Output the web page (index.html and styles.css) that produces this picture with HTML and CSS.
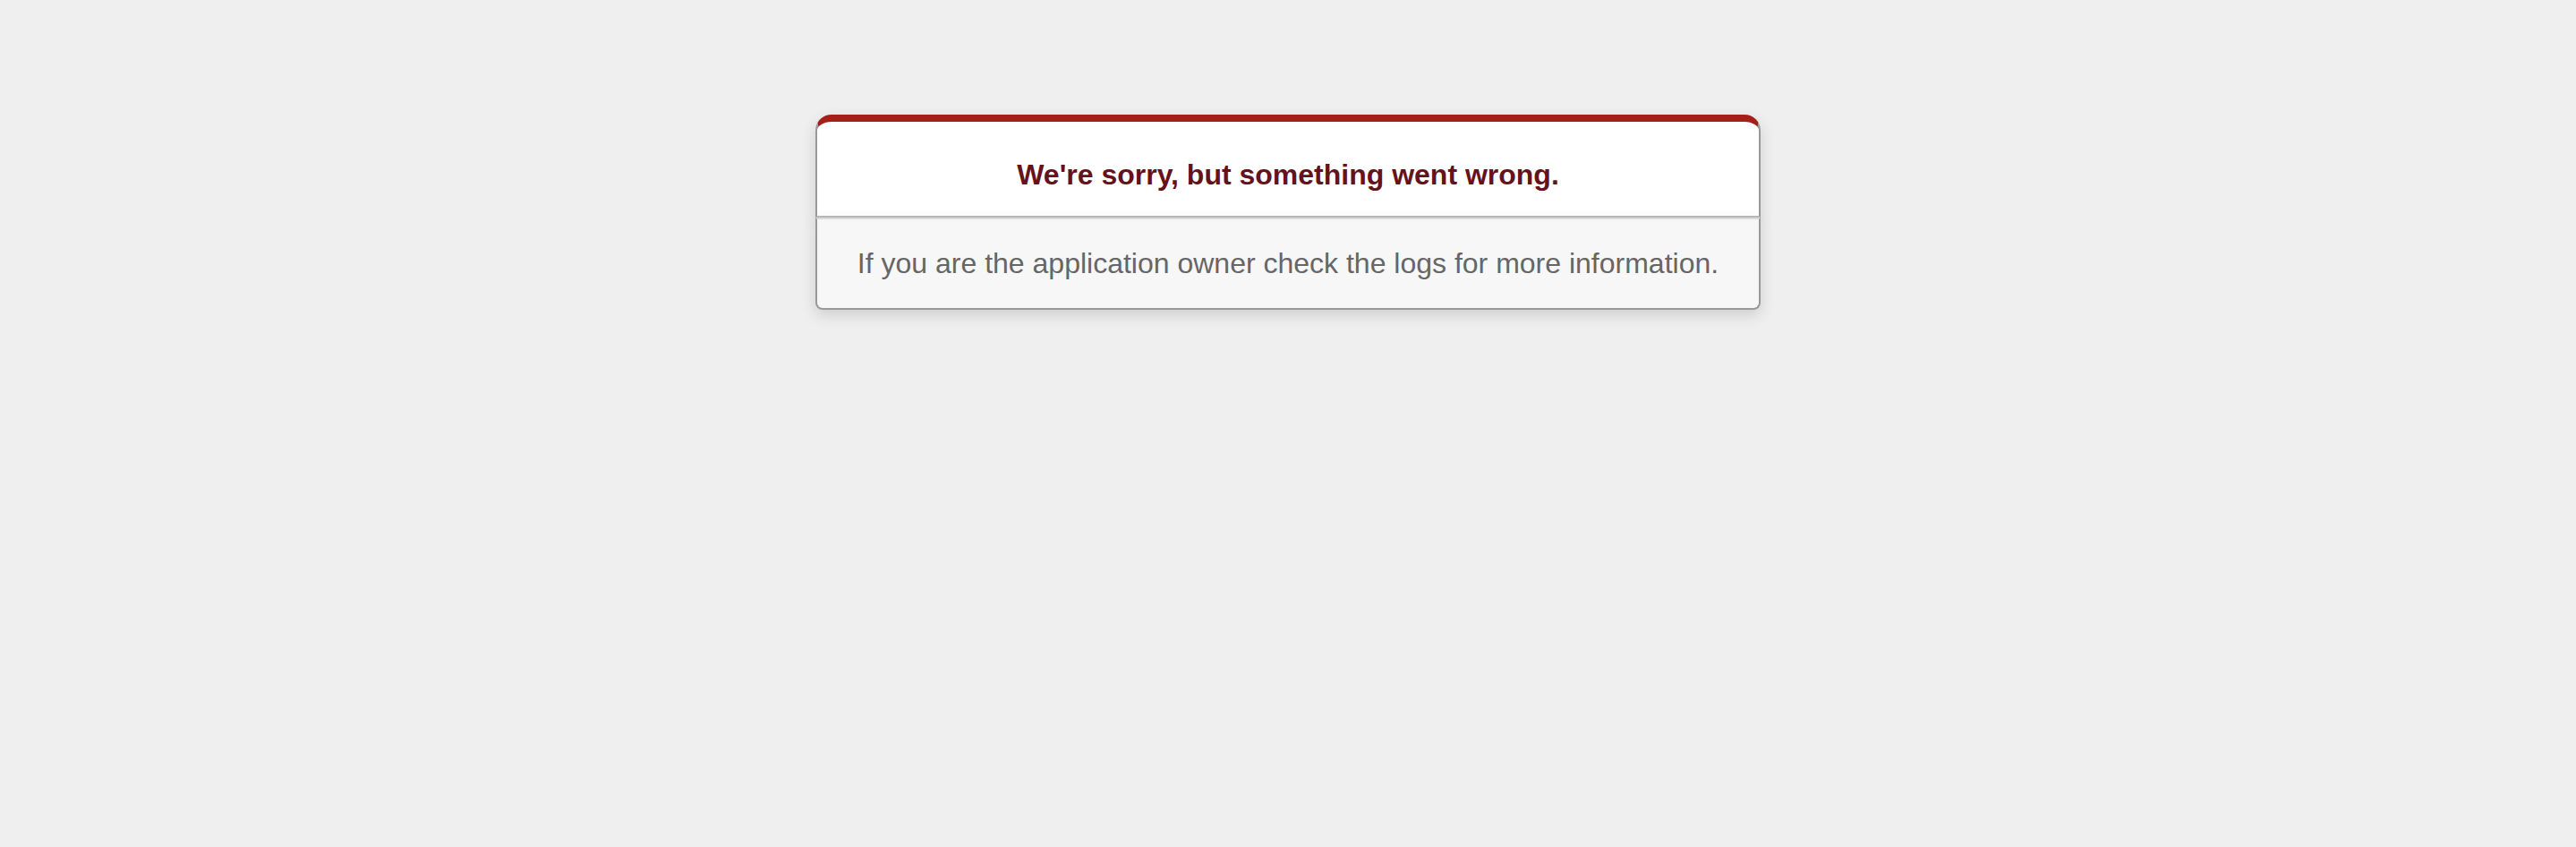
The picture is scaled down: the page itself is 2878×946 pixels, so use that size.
FILE: index.html
```html
<!DOCTYPE html>
<html>
<head>
<meta charset="utf-8">
<title>We're sorry, but something went wrong (500)</title>
<link rel="stylesheet" href="styles.css">
</head>
<body class="error-page">
  <div class="dialog">
    <div class="dialog-head">
      <h1 class="dialog-title">We're sorry, but something went wrong.</h1>
    </div>
    <p class="dialog-foot">If you are the application owner check the logs for more information.</p>
  </div>
</body>
</html>
```

FILE: styles.css
```css
.error-page {
  background-color: #EFEFEF;
  color: #2E2F30;
  text-align: center;
  font-family: "Liberation Sans", Arial, sans-serif;
  font-size: 32px;
  margin: 0;
}

.dialog {
  width: 95%;
  max-width: 33em;
  margin: 4em auto 0;
}

.dialog-head {
  border: 2px solid #CCC;
  border-right-color: #999;
  border-left-color: #999;
  border-bottom-color: #BBB;
  border-top: #A41F17 solid 8px;
  border-top-left-radius: 18px;
  border-top-right-radius: 18px;
  background-color: white;
  padding: 14px 12% 0;
  box-shadow: 0 6px 16px rgba(50, 50, 50, 0.17);
}

.dialog-title {
  font-size: 100%;
  color: #65131A;
  line-height: 1.5em;
  margin: 0.67em 0;
}

.dialog-foot {
  margin: 0 0 1em;
  padding: 1em;
  line-height: 1.1;
  background-color: #F7F7F7;
  border: 2px solid #CCC;
  border-right-color: #999;
  border-left-color: #999;
  border-bottom-color: #999;
  border-bottom-left-radius: 8px;
  border-bottom-right-radius: 8px;
  border-top-color: #DADADA;
  color: #666;
  box-shadow: 0 6px 16px rgba(50, 50, 50, 0.17);
}
```
